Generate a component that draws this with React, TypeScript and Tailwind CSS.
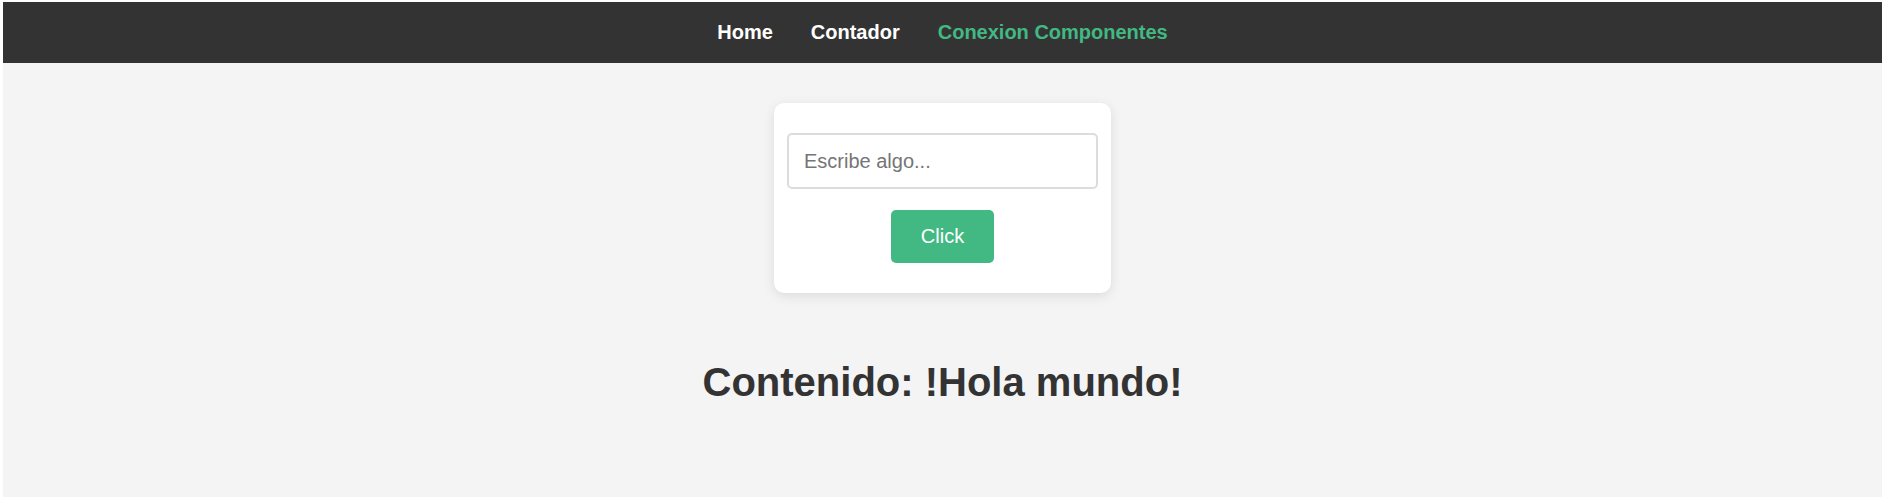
import React, { useState } from "react";

const links = [
  { label: "Home", active: false },
  { label: "Contador", active: false },
  { label: "Conexion Componentes", active: true },
];

const App: React.FC = () => {
  const [texto, setTexto] = useState("");
  const [contenido, setContenido] = useState("!Hola mundo!");

  return (
    <div className="min-h-screen bg-white pt-[2px] pl-[3px] pr-[5px] font-['Liberation_Sans',Arial,sans-serif]">
      <div className="h-[495px] bg-[#f4f4f4] flex flex-col">
        {/* Navegacion */}
        <nav className="h-[61px] pb-[2px] bg-[#333333] flex items-center justify-center gap-[38px]">
          {links.map((link) => (
            <a
              key={link.label}
              href="#"
              className={
                link.active
                  ? "text-[20px] font-bold text-[#42b883]"
                  : "text-[20px] font-bold text-white"
              }
            >
              {link.label}
            </a>
          ))}
        </nav>

        {/* Tarjeta con input */}
        <div className="flex flex-col items-center">
          <div className="mt-[40px] w-[337px] bg-white rounded-[10px] shadow-[0_3px_12px_rgba(0,0,0,0.1)] px-[13px] pt-[30px] pb-[30px] flex flex-col items-center">
            <input
              value={texto}
              onChange={(e) => setTexto(e.target.value)}
              placeholder="Escribe algo..."
              className="w-full h-[56px] border-2 border-[#dcdcdc] rounded-[5px] px-[15px] text-[20px] text-[#333] placeholder:text-[#757575] outline-none"
            />
            <button
              onClick={() => setContenido(texto)}
              className="mt-[21px] h-[53px] px-[30px] pb-[2px] bg-[#42b883] rounded-[5px] text-white text-[20px]"
            >
              Click
            </button>
          </div>

          <h1 className="mt-[66px] text-[40px] leading-[46px] font-bold text-[#333333]">
            Contenido: {contenido}
          </h1>
        </div>
      </div>
    </div>
  );
};

export default App;
